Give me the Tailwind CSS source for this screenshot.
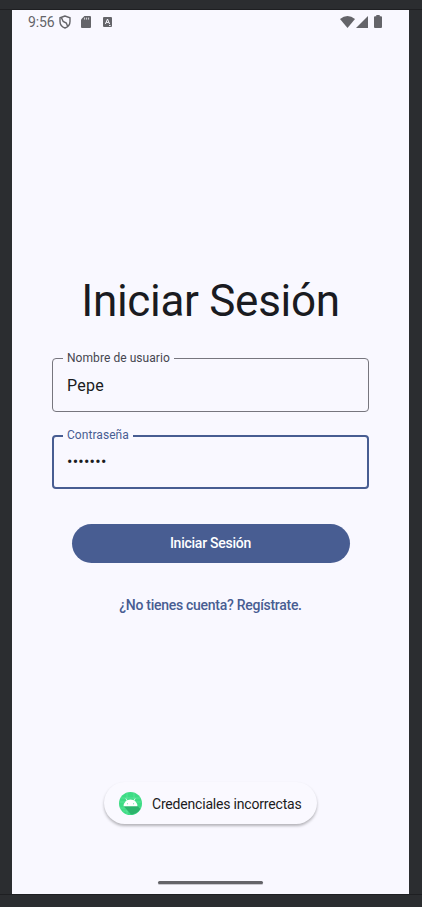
<!DOCTYPE html>
<html lang="es">
<head>
<meta charset="utf-8">
<title>Iniciar Sesión</title>
<script src="https://cdn.jsdelivr.net/npm/@tailwindcss/browser@4"></script>
</head>
<body class="bg-[#2b2d30] font-[Roboto,sans-serif]">
<div class="h-[907px] w-[422px] overflow-hidden pt-[9px]">
  <div class="border-y border-[#1e1f22] pl-3 pr-[13px]">
    <main class="flex h-[884px] w-[397px] flex-col items-center bg-[#f9f8ff] text-[#1a1b21]">
      <header class="flex h-6 w-full items-center pl-4 pr-[27px] text-[#646469]">
        <span class="w-[31px] whitespace-nowrap text-[14px] leading-6 tracking-[-0.1px]">9:56</span>
        <svg class="h-[14px] w-3" viewBox="0 0 12 14" fill="none" stroke="currentColor" stroke-width="1.4"><path d="M6 1 L1 2.8 V6.5 C1 9.5 3 12 6 13 C9 12 11 9.5 11 6.5 V2.8 Z"/><path d="M2.4 2.6 L4.2 6.5 L7.3 8 L8.6 11.3"/></svg>
        <svg class="ml-[10px] h-3 w-[10px]" viewBox="0 0 10 12" fill="currentColor"><path d="M3.4 0H9a1 1 0 0 1 1 1v10a1 1 0 0 1-1 1H1a1 1 0 0 1-1-1V3.4z"/><path d="M3.6 1.600v2M5.6 1.600v2M7.6 1.600v2" stroke="#f9f8ff" stroke-width=".8"/></svg>
        <svg class="ml-3 h-[10px] w-[9px]" viewBox="0 0 9 10"><rect width="9" height="10" rx="1" fill="currentColor"/><path d="M2.4 7 L4.5 2 L6.6 7 M3.2 5.4H5.8 M6.1 8.5h1.5" fill="none" stroke="#f9f8ff" stroke-width="1"/></svg>
        <svg class="ml-auto h-3 w-[15px]" viewBox="0 0 15 12" fill="currentColor"><path d="M7.5 12 L0 3 Q7.5 -3 15 3 Z"/></svg>
        <svg class="ml-px h-3 w-3" viewBox="0 0 12 12" fill="currentColor"><path d="M12 0V12H0Z"/></svg>
        <svg class="-mt-px ml-[6px] h-[13px] w-2" viewBox="0 0 8 13" fill="currentColor"><path d="M2.3 0h3.4v1.2H7a1 1 0 0 1 1 1V12a1 1 0 0 1-1 1H1a1 1 0 0 1-1-1V2.200a1 1 0 0 1 1-1h1.300z"/></svg>
      </header>
      <h1 class="mt-[241px] h-[52px] whitespace-nowrap text-[44px] leading-[52px] tracking-[-0.3px]">Iniciar Sesión</h1>
      <div class="relative mt-[31px] flex h-[54px] w-[317px] shrink-0 items-center rounded-[4px] border border-[#77767e] px-[14px]">
        <label class="absolute -top-[9px] left-[10px] bg-[#f9f8ff] px-1 text-[12px] leading-4 whitespace-nowrap tracking-[0.06px] text-[#45464f]">Nombre de usuario</label>
        <span class="pt-[2px] text-[16px] leading-5 tracking-[0.25px]">Pepe</span>
      </div>
      <div class="relative mt-[23px] flex h-[54px] w-[317px] shrink-0 items-center rounded-[4px] border-2 border-[#485d92] px-[13px]">
        <label class="absolute -top-[10px] left-[9px] bg-[#f9f8ff] px-1 text-[12px] leading-4 whitespace-nowrap tracking-[0.06px] text-[#485d92]">Contraseña</label>
        <span class="text-[16px] leading-5 tracking-[0.25px]">•••••••</span>
      </div>
      <button class="mt-[35px] h-[39px] w-[278px] shrink-0 rounded-full bg-[#485d92] pb-px text-[14px] font-medium leading-5 tracking-[-0.25px] text-white">Iniciar Sesión</button>
      <a class="mt-[32px] whitespace-nowrap text-[14px] font-medium leading-5 tracking-[-0.28px] text-[#485d92]">¿No tienes cuenta? Regístrate.</a>
      <div class="mt-[167px] flex h-[42px] w-[213px] shrink-0 items-center rounded-full bg-[#faf9ff] pl-[15px] shadow-[0_2px_3px_rgba(0,0,0,0.28)]">
        <svg class="mr-[10px] h-[23px] w-[23px] shrink-0" viewBox="0 0 23 23"><circle cx="11.500" cy="11.500" r="11.500" fill="#3ddc84"/><path d="M2 6H21M1 10H22M1 16H22M4 19H19M8 1V22M15 1V22" stroke="#80e8b0" stroke-width=".4"/><path d="M4.700 14.300 L12 22.500 Q18 22 21.500 17 L18.500 14Z" fill="#2cb36c"/><path d="M4.500 14.300a7 6.800 0 0 1 14 0z" fill="#fff"/><path d="M6.800 6.500l1.500 2.500M16.200 6.500l-1.500 2.500" stroke="#fff" stroke-width=".8"/><circle cx="8.400" cy="11.700" r=".5" fill="#3ddc84"/><circle cx="14.600" cy="11.700" r=".5" fill="#3ddc84"/></svg>
        <span class="whitespace-nowrap pt-px text-[14px] leading-5 tracking-[-0.19px]">Credenciales incorrectas</span>
      </div>
      <div class="mt-[57px] h-[3px] w-[105px] shrink-0 rounded-full bg-[#646469] shadow-[0_1px_0_#c9c8cf]"></div>
    </main>
  </div>
</div>
</body>
</html>
